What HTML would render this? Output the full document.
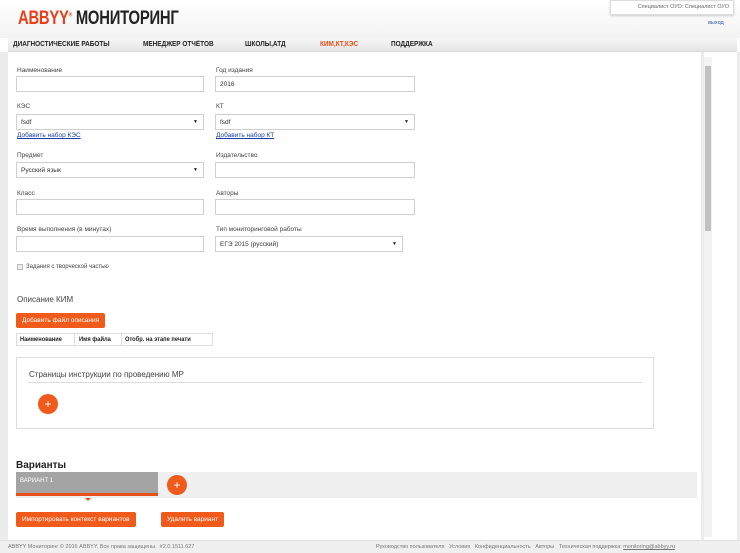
<!DOCTYPE html>
<html><head><meta charset="utf-8"><style>
*{box-sizing:border-box;margin:0;padding:0}
body{width:740px;height:553px;overflow:hidden;background:#fff;font-family:"Liberation Sans",sans-serif;font-size:7px;color:#333;position:relative}
.a{position:absolute}
.hdr{left:0;top:0;width:740px;height:38px;background:linear-gradient(#fff,#f3f3f3)}
.nav{left:8px;top:38px;width:729px;height:14px;background:linear-gradient(#f7f7f7,#e4e4e4);border-bottom:1px solid #ddd}
.nav span{position:absolute;top:3px;font-size:7px;font-weight:bold;color:#222;transform:scaleX(0.92);transform-origin:left}
.lbl{font-size:6.5px;color:#444}
.inp{border:1px solid #d0d0d0;background:#fff;height:16px;font-size:6.5px;padding:4px 4px;color:#333}
.sel:after{content:"▼";position:absolute;right:5px;top:4px;font-size:5px;color:#222}
.lnk{font-size:6.5px;color:#1a3fa8;text-decoration:underline}
.btn{background:#f05a1a;color:#fff;font-size:6.5px;border-radius:2px;padding:0 6px;line-height:15px;height:15px}
.plus{width:20px;height:20px;border-radius:50%;background:#f05a1a;color:#fff;font-size:12px;text-align:center;line-height:20px}
</style></head><body>
<div class="a hdr"></div>
<div class="a" style="left:18px;top:8px;font-size:19px;font-weight:bold;letter-spacing:-0.3px;transform:scaleX(0.78);transform-origin:left;white-space:nowrap"><span style="color:#e8401a">ABBYY</span><sup style="font-size:6px;color:#e8401a">®</sup> <span style="color:#222">МОНИТОРИНГ</span></div>
<div class="a" style="left:610px;top:0;width:124px;height:15px;border:1px solid #ddd;background:#fff;box-shadow:0 1px 2px #ccc;font-size:5.5px;color:#666;padding:3px 4px;text-align:right">Специалист ОУО: Специалист ОУО</div>
<div class="a" style="left:708px;top:20px;font-size:5.5px;color:#3355aa">выход</div>
<div class="a nav"><span style="left:5px">ДИАГНОСТИЧЕСКИЕ РАБОТЫ</span><span style="left:135px">МЕНЕДЖЕР ОТЧЁТОВ</span><span style="left:237px">ШКОЛЫ,АТД</span><span style="left:312px;color:#e8501a">КИМ,КТ,КЭС</span><span style="left:383px">ПОДДЕРЖКА</span></div>
<div class="a" style="left:0;top:52px;width:8px;height:490px;background:#ececec"></div>
<div class="a" style="left:737px;top:52px;width:3px;height:490px;background:#ececec"></div>
<div class="a" style="left:701px;top:52px;width:3px;height:488px;background:#ececec"></div>
<div class="a" style="left:704px;top:57px;width:8px;height:480px;background:#f2f2f2"></div>
<div class="a" style="left:705px;top:66px;width:6px;height:165px;background:#c1c1c1"></div>

<div class="a lbl" style="left:17px;top:67px">Наименование</div>
<div class="a inp" style="left:16px;top:76px;width:188px"></div>
<div class="a lbl" style="left:216px;top:67px">Год издания</div>
<div class="a inp" style="left:215px;top:76px;width:200px">2016</div>

<div class="a lbl" style="left:17px;top:103px">КЭС</div>
<div class="a inp sel" style="left:16px;top:114px;width:188px">fsdf</div>
<div class="a lnk" style="left:17px;top:132px">Добавить набор КЭС</div>
<div class="a lbl" style="left:216px;top:103px">КТ</div>
<div class="a inp sel" style="left:215px;top:114px;width:200px">fsdf</div>
<div class="a lnk" style="left:216px;top:132px">Добавить набор КТ</div>

<div class="a lbl" style="left:17px;top:152px">Предмет</div>
<div class="a inp sel" style="left:16px;top:162px;width:188px">Русский язык</div>
<div class="a lbl" style="left:216px;top:152px">Издательство</div>
<div class="a inp" style="left:215px;top:162px;width:200px"></div>

<div class="a lbl" style="left:17px;top:190px">Класс</div>
<div class="a inp" style="left:16px;top:199px;width:188px"></div>
<div class="a lbl" style="left:216px;top:190px">Авторы</div>
<div class="a inp" style="left:215px;top:199px;width:200px"></div>

<div class="a lbl" style="left:17px;top:226px">Время выполнения (в минутах)</div>
<div class="a inp" style="left:16px;top:236px;width:188px"></div>
<div class="a lbl" style="left:216px;top:226px">Тип мониторинговой работы</div>
<div class="a inp sel" style="left:215px;top:236px;width:188px">ЕГЭ 2015 (русский)</div>

<div class="a" style="left:17px;top:264px;width:6px;height:6px;border:1px solid #bbb;background:#eee"></div>
<div class="a lbl" style="left:26px;top:264px;font-size:6px">Задания с творческой частью</div>

<div class="a" style="left:17px;top:295px;font-size:8px;color:#444">Описание КИМ</div>
<div class="a btn" style="left:16px;top:313px">Добавить файл описания</div>
<div class="a" style="left:16px;top:333px;width:197px;height:13px;border:1px solid #ddd;font-size:6.5px;font-weight:bold;color:#222">
<span class="a" style="left:3px;top:2px;transform:scaleX(0.88);transform-origin:left">Наименование</span><span class="a" style="left:57px;top:0;height:11px;border-left:1px solid #ddd"></span><span class="a" style="left:62px;top:2px;transform:scaleX(0.88);transform-origin:left">Имя файла</span><span class="a" style="left:104px;top:0;height:11px;border-left:1px solid #ddd"></span><span class="a" style="left:108px;top:2px;transform:scaleX(0.88);transform-origin:left;white-space:nowrap">Отобр. на этапе печати</span></div>

<div class="a" style="left:16px;top:357px;width:638px;height:72px;border:1px solid #ddd"></div>
<div class="a" style="left:29px;top:370px;font-size:8px;color:#444">Страницы инструкции по проведению МР</div>
<div class="a" style="left:28px;top:382px;width:614px;border-top:1px solid #ddd"></div>
<div class="a plus" style="left:38px;top:394px">+</div>

<div class="a" style="left:16px;top:460px;font-size:10px;font-weight:bold;color:#222">Варианты</div>
<div class="a" style="left:16px;top:472px;width:681px;height:26px;background:#f0f0f0"></div>
<div class="a" style="left:16px;top:472px;width:142px;height:24px;background:#a4a4a4;border-bottom:3px solid #e8501a;color:#fff;font-size:6px;padding:6px 4px">ВАРИАНТ 1</div>
<div class="a" style="left:85px;top:498px;width:0;height:0;border-left:3px solid transparent;border-right:3px solid transparent;border-top:3px solid #e8501a"></div>
<div class="a plus" style="left:167px;top:475px">+</div>
<div class="a btn" style="left:16px;top:512px">Импортировать контекст вариантов</div>
<div class="a btn" style="left:161px;top:512px">Удалить вариант</div>

<div class="a" style="left:0;top:540px;width:740px;height:13px;background:#f0f0f0;border-top:1px solid #e0e0e0"></div>
<div class="a" style="left:8px;top:544px;font-size:5.5px;color:#777">ABBYY Мониторинг © 2016 ABBYY. Все права защищены. &nbsp;#2.0.1511.627</div>
<div class="a" style="left:376px;top:544px;font-size:5.5px;color:#777;white-space:nowrap">Руководство пользователя &nbsp; Условия &nbsp; Конфиденциальность &nbsp; Авторы &nbsp; Техническая поддержка: <u>monitoring@abbyy.ru</u></div>
</body></html>
